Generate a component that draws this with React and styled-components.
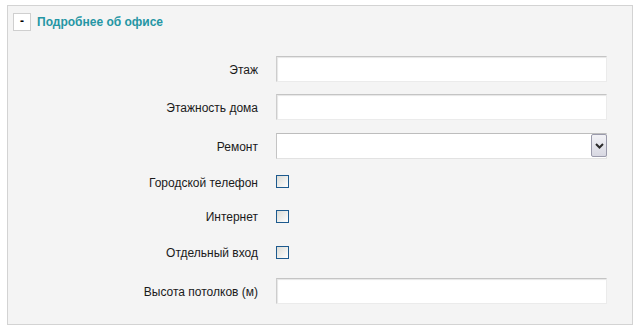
import React from "react";
import styled, { createGlobalStyle } from "styled-components";

const GlobalStyle = createGlobalStyle`
  body {
    margin: 0;
    background: #ffffff;
    font-family: "Liberation Sans", Arial, sans-serif;
  }
`;

const fields = [
  { label: "Этаж", type: "text", height: 38 },
  { label: "Этажность дома", type: "text", height: 38 },
  { label: "Ремонт", type: "select", height: 39 },
  { label: "Городской телефон", type: "check", height: 33 },
  { label: "Интернет", type: "check", height: 36 },
  { label: "Отдельный вход", type: "check", height: 36 },
  { label: "Высота потолков (м)", type: "text", height: 41 },
];

const App = () => {
  return (
    <>
      <GlobalStyle />
      <Panel>
        <Header>
          <ToggleButton>-</ToggleButton>
          <Title>Подробнее об офисе</Title>
        </Header>
        <Form>
          {fields.map((field) => (
            <Row key={field.label} $height={field.height}>
              <Label>{field.label}</Label>
              {field.type === "text" && <TextInput />}
              {field.type === "select" && (
                <SelectBox>
                  <SelectArrow>
                    <svg width="9" height="6" viewBox="0 0 9 6">
                      <path
                        d="M1 1 L4.5 4.5 L8 1"
                        fill="none"
                        stroke="#2b2b2b"
                        strokeWidth="2"
                      />
                    </svg>
                  </SelectArrow>
                </SelectBox>
              )}
              {field.type === "check" && <CheckBox />}
            </Row>
          ))}
        </Form>
      </Panel>
    </>
  );
};

export default App;

const Panel = styled.div`
  box-sizing: border-box;
  width: 626px;
  height: 320px;
  margin: 5px 0 0 7px;
  background: #f4f4f4;
  border: 1px solid #d3d3d3;
`;

const Header = styled.div`
  display: flex;
  align-items: flex-start;
  gap: 6px;
  height: 44px;
  padding: 7px 0 0 5px;
  box-sizing: border-box;
`;

const ToggleButton = styled.div`
  box-sizing: border-box;
  width: 18px;
  height: 18px;
  background: #ffffff;
  border: 1px solid #cfcfcf;
  font-size: 12px;
  font-weight: bold;
  line-height: 15px;
  text-align: center;
  color: #000;
`;

const Title = styled.span`
  font-size: 12px;
  font-weight: bold;
  color: #2596a4;
  line-height: 18px;
`;

const Form = styled.div`
  display: flex;
  flex-direction: column;
`;

const Row = styled.div`
  display: grid;
  grid-template-columns: 250px 331px;
  column-gap: 18px;
  align-items: center;
  height: ${(p) => p.$height}px;
`;

const Label = styled.span`
  text-align: right;
  font-size: 12px;
  color: #1a1a1a;
  padding-top: 2px;
`;

const TextInput = styled.input`
  box-sizing: border-box;
  width: 331px;
  height: 26px;
  background: #ffffff;
  border: 1px solid #ebebeb;
  border-top-color: #c4c4c4;
  border-left-color: #cdcdcd;
  box-shadow: inset 1px 1px 1px #e6e6e6;
  outline: none;
`;

const SelectBox = styled.div`
  box-sizing: border-box;
  width: 331px;
  height: 26px;
  background: #ffffff;
  border: 1px solid #e2e2e2;
  border-top-color: #bdbdbd;
  border-left-color: #c4c4c4;
  display: flex;
  justify-content: flex-end;
  align-items: center;
`;

const SelectArrow = styled.div`
  box-sizing: border-box;
  width: 16px;
  height: 23px;
  margin-right: -1px;
  border: 1px solid #9a9aab;
  border-radius: 2px;
  background: linear-gradient(#f2f2f6, #d8d8e2);
  display: flex;
  align-items: center;
  justify-content: center;
`;

const CheckBox = styled.span`
  box-sizing: border-box;
  display: block;
  width: 13px;
  height: 13px;
  border: 1px solid #1d5a8e;
  background: linear-gradient(135deg, #dcdcd6, #ffffff);
`;
